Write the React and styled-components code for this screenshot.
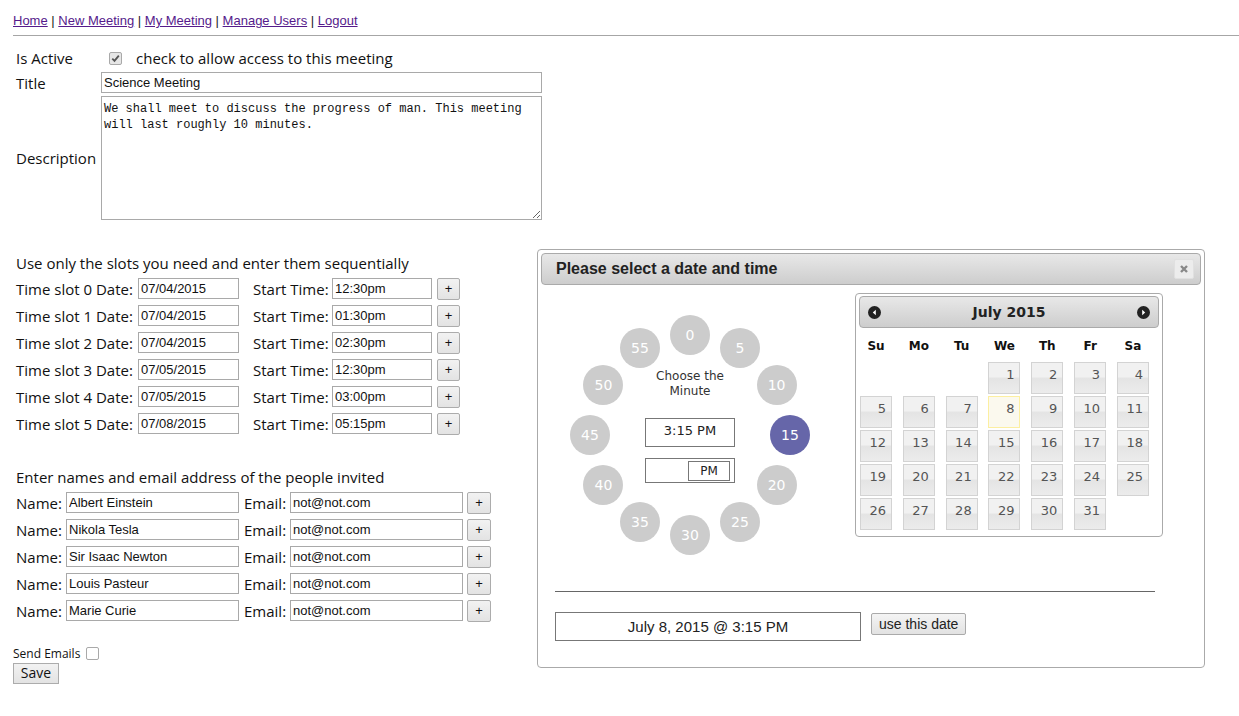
import React from "react";
import styled, { createGlobalStyle } from "styled-components";

const Global = createGlobalStyle`
  html, body { margin: 0; padding: 0; background: #fff; }
  body { font-family: "Open Sans", "Liberation Sans", sans-serif; color: #111; }
`;

const Page = styled.div`
  position: relative;
  width: 1239px;
  height: 716px;
  padding-left: 13px;
  box-sizing: border-box;
  overflow: hidden;
`;

const Nav = styled.div`
  padding-top: 13px;
  height: 16px;
  line-height: 16px;
  font-family: "Liberation Sans", Arial, sans-serif;
  font-size: 13px;
  color: #222;
`;
const NavLink = styled.a`
  color: #551a8b;
  text-decoration: underline;
`;
const Rule = styled.div`
  margin-top: 6px;
  border-top: 1px solid #a6a6a6;
`;

const TopGrid = styled.div`
  margin-top: 11px;
  display: grid;
  grid-template-columns: 88px 441px;
  grid-template-rows: 22px 23px 124px;
  row-gap: 2px;
  align-items: center;
`;
const Label = styled.div`
  font-size: 15px;
  padding-left: 3px;
  white-space: nowrap;
`;
const Check = styled.span`
  display: inline-block;
  width: 11px;
  height: 11px;
  border: 1px solid #a9a9a9;
  border-radius: 2px;
  background: ${p => (p.$on ? "#e6e6e6" : "#fff")};
  vertical-align: middle;
  position: relative;
  margin: ${p => p.$m || "0"};
`;
const CheckRow = styled.div`
  display: flex;
  align-items: center;
  font-size: 15px;
  padding-left: 8px;
  gap: 14px;
`;
const Field = styled.input`
  box-sizing: border-box;
  width: ${p => p.$w}px;
  height: 21px;
  border: 1px solid #a9a9a9;
  padding: 1px 2px;
  font-family: "Liberation Sans", Arial, sans-serif;
  font-size: 13px;
  color: #111;
  margin: 0;
  outline: none;
`;
const Area = styled.textarea`
  box-sizing: border-box;
  width: 441px;
  height: 124px;
  border: 1px solid #a9a9a9;
  padding: 4px 2px 2px;
  font-family: "Liberation Mono", monospace;
  font-size: 12px;
  line-height: 16px;
  color: #111;
  resize: both;
  margin: 0;
`;

const Heading = styled.div`
  font-size: 15px;
  padding-left: 3px;
  height: 20px;
  line-height: 20px;
  margin-top: ${p => p.$top}px;
  margin-bottom: 2px;
`;
const Row = styled.div`
  display: flex;
  align-items: center;
  height: 27px;
`;
const RowLabel = styled.span`
  width: ${p => p.$w}px;
  padding-left: ${p => p.$pl || 3}px;
  box-sizing: border-box;
  font-size: 15px;
  white-space: nowrap;
`;
const Plus = styled.button`
  box-sizing: border-box;
  width: ${p => p.$w || 23}px;
  height: 22px;
  margin-left: ${p => p.$ml || 5}px;
  border: 1px solid #acacac;
  border-radius: 2px;
  background: linear-gradient(#f2f2f2, #e3e3e3);
  font-family: "Liberation Sans", Arial, sans-serif;
  font-size: 13px;
  padding: 0;
  color: #111;
`;
const SendRow = styled.div`
  margin-top: 21px;
  height: 16px;
  display: flex;
  align-items: center;
  font-size: 12px;
  gap: 6px;
`;
const SaveBtn = styled.button`
  box-sizing: border-box;
  width: 46px;
  height: 21px;
  margin-top: -1px;
  border: 1px solid #acacac;
  background: linear-gradient(#f2f2f2, #e3e3e3);
  font-family: "Open Sans", sans-serif;
  font-size: 14px;
  padding: 0;
  color: #111;
  line-height: 18px;
`;

/* ---- dialog ---- */
const Dialog = styled.div`
  position: absolute;
  left: 537px;
  top: 249px;
  width: 668px;
  height: 419px;
  box-sizing: border-box;
  border: 1px solid #aaa;
  border-radius: 4px;
  padding: 3px;
  background: #fff;
`;
const TitleBar = styled.div`
  height: 32px;
  box-sizing: border-box;
  border: 1px solid #aaa;
  border-radius: 4px;
  background: linear-gradient(#e8e8e8, #cdcdcd);
  display: flex;
  align-items: center;
  justify-content: space-between;
  padding: 0 6px 0 14px;
  font-family: "Liberation Sans", Arial, sans-serif;
  font-weight: bold;
  font-size: 16px;
  color: #222;
`;
const Close = styled.span`
  width: 18px;
  height: 18px;
  display: flex;
  align-items: center;
  justify-content: center;
  background: #ececec;
  border: 1px solid #e0e0e0;
  border-radius: 2px;
`;
const Body = styled.div`
  display: flex;
  padding: 8px 0 0 14px;
  height: 298px;
`;
const ClockFace = styled.div`
  position: relative;
  width: 270px;
  height: 260px;
  margin-top: 12px;
  display: flex;
  flex-direction: column;
  align-items: center;
  padding-top: 64px;
  box-sizing: border-box;
`;
const Caption = styled.div`
  font-family: "DejaVu Sans", Verdana, sans-serif;
  font-size: 12px;
  line-height: 15px;
  color: #333;
  text-align: center;
  width: 90px;
`;
const TimeBox = styled.div`
  margin-top: 19px;
  width: 90px;
  height: 29px;
  box-sizing: border-box;
  border: 1px solid #777;
  font-family: "DejaVu Sans", Verdana, sans-serif;
  font-size: 13px;
  text-align: center;
  padding-top: 4px;
  color: #222;
`;
const AmPmBox = styled.div`
  margin-top: 11px;
  width: 90px;
  height: 25px;
  box-sizing: border-box;
  border: 1px solid #777;
  display: flex;
  justify-content: flex-end;
  align-items: center;
  padding-right: 4px;
`;
const AmPm = styled.span`
  width: 42px;
  height: 20px;
  box-sizing: border-box;
  border: 1px solid #777;
  font-family: "DejaVu Sans", Verdana, sans-serif;
  font-size: 12px;
  line-height: 18px;
  text-align: center;
  color: #222;
`;
const Dot = styled.div`
  position: absolute;
  width: 40px;
  height: 40px;
  border-radius: 50%;
  background: ${p => (p.$on ? "#6666a9" : "#cccccc")};
  color: #fff;
  font-family: "DejaVu Sans", Verdana, sans-serif;
  font-size: 14px;
  display: flex;
  align-items: center;
  justify-content: center;
  transform: translate(-50%, -50%);
`;

const Cal = styled.div`
  margin-left: 30px;
  width: 308px;
  height: 244px;
  box-sizing: border-box;
  border: 1px solid #aaa;
  border-radius: 4px;
  padding: 2px 3px;
  font-family: "DejaVu Sans", Verdana, sans-serif;
`;
const CalHead = styled.div`
  height: 32px;
  box-sizing: border-box;
  border: 1px solid #aaa;
  border-radius: 4px;
  background: linear-gradient(#e8e8e8, #cdcdcd);
  display: flex;
  align-items: center;
  justify-content: space-between;
  padding: 0 8px;
  font-weight: bold;
  font-size: 14px;
  color: #222;
`;
const Days = styled.div`
  display: grid;
  grid-template-columns: repeat(7, 32px);
  justify-content: space-between;
  margin: 0 10px 0 1px;
  row-gap: 2px;
`;
const DayName = styled.div`
  height: 33px;
  display: flex;
  align-items: center;
  justify-content: center;
  font-weight: bold;
  font-size: 12px;
  color: #111;
  padding-top: 1px;
`;
const Day = styled.div`
  height: 32px;
  box-sizing: border-box;
  border: 1px solid ${p => (p.$today ? "#fcefa1" : "#d3d3d3")};
  background: ${p =>
    p.$today
      ? "#fbf9ee"
      : "linear-gradient(#f1f1f1 0%, #f1f1f1 45%, #e4e4e4 52%, #ececec 100%)"};
  color: #555;
  font-size: 13px;
  text-align: right;
  padding: 4px 5px 0 0;
  visibility: ${p => (p.$empty ? "hidden" : "visible")};
`;

const Foot = styled.div`
  padding-left: 14px;
`;
const FootRule = styled.div`
  width: 600px;
  border-top: 1px solid #666;
`;
const FootRow = styled.div`
  margin-top: 20px;
  display: flex;
  align-items: flex-start;
  gap: 10px;
`;
const DateShow = styled.div`
  width: 306px;
  height: 29px;
  box-sizing: border-box;
  border: 1px solid #777;
  text-align: center;
  font-family: "Liberation Sans", Arial, sans-serif;
  font-size: 15px;
  line-height: 27px;
  color: #222;
`;
const UseBtn = styled.button`
  margin-top: 1px;
  height: 22px;
  padding: 0 7px;
  border: 1px solid #aaa;
  border-radius: 2px;
  background: linear-gradient(#f4f4f4, #e2e2e2);
  font-family: "Liberation Sans", Arial, sans-serif;
  font-size: 14px;
  color: #222;
`;

const Arrow = ({ dir }) => (
  <svg width="13" height="13" viewBox="0 0 13 13">
    <circle cx="6.5" cy="6.5" r="6.5" fill="#222" />
    {dir === "l" ? (
      <path d="M7.8 3.8 L4.8 6.5 L7.8 9.2 Z" fill="#fff" />
    ) : (
      <path d="M5.2 3.8 L8.2 6.5 L5.2 9.2 Z" fill="#fff" />
    )}
  </svg>
);

const Tick = () => (
  <svg width="11" height="11" viewBox="0 0 11 11" style={{ position: "absolute", left: 0, top: 0 }}>
    <path d="M2.3 5.6 L4.5 7.8 L8.8 2.6" stroke="#555" strokeWidth="1.8" fill="none" />
  </svg>
);

const slots = [
  ["07/04/2015", "12:30pm"],
  ["07/04/2015", "01:30pm"],
  ["07/04/2015", "02:30pm"],
  ["07/05/2015", "12:30pm"],
  ["07/05/2015", "03:00pm"],
  ["07/08/2015", "05:15pm"],
];
const people = ["Albert Einstein", "Nikola Tesla", "Sir Isaac Newton", "Louis Pasteur", "Marie Curie"];
const dayNames = ["Su", "Mo", "Tu", "We", "Th", "Fr", "Sa"];
const cells = [];
for (let i = 0; i < 3; i++) cells.push(null);
for (let d = 1; d <= 31; d++) cells.push(d);

export default function App() {
  return (
    <Page>
      <Global />
      <Nav>
        <NavLink href="#">Home</NavLink> | <NavLink href="#">New Meeting</NavLink> |{" "}
        <NavLink href="#">My Meeting</NavLink> | <NavLink href="#">Manage Users</NavLink> |{" "}
        <NavLink href="#">Logout</NavLink>
      </Nav>
      <Rule />

      <TopGrid>
        <Label>Is Active</Label>
        <CheckRow>
          <Check $on>
            <Tick />
          </Check>
          check to allow access to this meeting
        </CheckRow>
        <Label>Title</Label>
        <Field $w={441} defaultValue="Science Meeting" />
        <Label>Description</Label>
        <Area
          defaultValue={"We shall meet to discuss the progress of man. This meeting will last roughly 10 minutes."}
        />
      </TopGrid>

      <Heading $top={33}>Use only the slots you need and enter them sequentially</Heading>
      {slots.map(([d, t], i) => (
        <Row key={i}>
          <RowLabel $w={125}>Time slot {i} Date:</RowLabel>
          <Field $w={101} defaultValue={d} />
          <RowLabel $w={93} $pl={14}>Start Time:</RowLabel>
          <Field $w={100} defaultValue={t} />
          <Plus>+</Plus>
        </Row>
      ))}

      <Heading $top={30}>Enter names and email address of the people invited</Heading>
      {people.map((n, i) => (
        <Row key={i}>
          <RowLabel $w={53}>Name:</RowLabel>
          <Field $w={173} defaultValue={n} />
          <RowLabel $w={51} $pl={5}>Email:</RowLabel>
          <Field $w={173} defaultValue="not@not.com" />
          <Plus $w={24} $ml={4}>+</Plus>
        </Row>
      ))}

      <SendRow>
        Send Emails <Check />
      </SendRow>
      <SaveBtn>Save</SaveBtn>

      <Dialog>
        <TitleBar>
          Please select a date and time
          <Close>
            <svg width="10" height="10" viewBox="0 0 10 10">
              <path d="M2 2 L8 8 M8 2 L2 8" stroke="#888" strokeWidth="2.4" />
            </svg>
          </Close>
        </TitleBar>
        <Body>
          <ClockFace>
            {Array.from({ length: 12 }, (_, i) => {
              const a = (i * Math.PI) / 6;
              return (
                <Dot
                  key={i}
                  $on={i === 3}
                  style={{ left: 135 + 100 * Math.sin(a), top: 130 - 100 * Math.cos(a) }}
                >
                  {i * 5}
                </Dot>
              );
            })}
            <Caption>Choose the Minute</Caption>
            <TimeBox>3:15 PM</TimeBox>
            <AmPmBox>
              <AmPm>PM</AmPm>
            </AmPmBox>
          </ClockFace>
          <Cal>
            <CalHead>
              <Arrow dir="l" />
              July 2015
              <Arrow dir="r" />
            </CalHead>
            <Days>
              {dayNames.map(n => (
                <DayName key={n}>{n}</DayName>
              ))}
            </Days>
            <Days>
              {cells.map((d, i) => (
                <Day key={i} $empty={!d} $today={d === 8}>
                  {d}
                </Day>
              ))}
            </Days>
          </Cal>
        </Body>
        <Foot>
          <FootRule />
          <FootRow>
            <DateShow>July 8, 2015 @ 3:15 PM</DateShow>
            <UseBtn>use this date</UseBtn>
          </FootRow>
        </Foot>
      </Dialog>
    </Page>
  );
}
